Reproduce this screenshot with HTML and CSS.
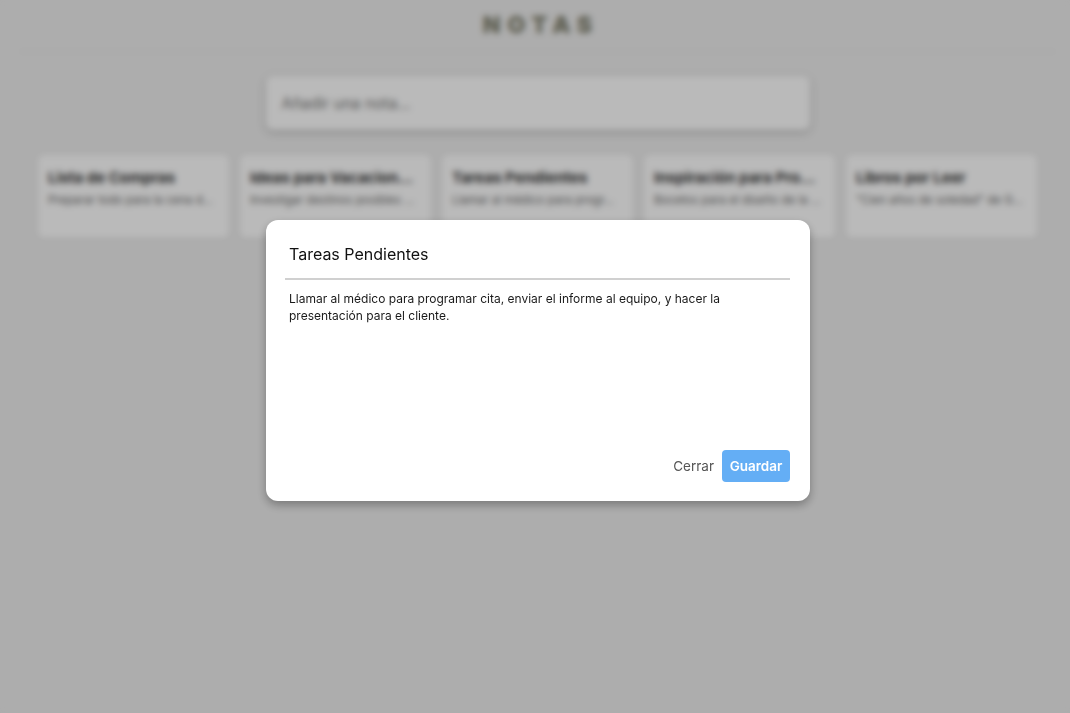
FILE: index.html
```html
<!DOCTYPE html>
<html lang="es">
<head>
<meta charset="utf-8">
<title>Notas</title>
<link rel="stylesheet" href="styles.css">
</head>
<body>
<div class="app">
  <header class="header">
    <h1 class="logo">NOTAS</h1>
  </header>
  <div class="composer">
    <div class="composer-input">Añadir una nota...</div>
  </div>
  <section class="notes">
    <article class="note"><h2 class="note-title">Lista de Compras</h2><p class="note-text">Preparar todo para la cena d...</p></article>
    <article class="note"><h2 class="note-title">Ideas para Vacacion...</h2><p class="note-text">Investigar destinos posibles ...</p></article>
    <article class="note"><h2 class="note-title">Tareas Pendientes</h2><p class="note-text">Llamar al médico para progr...</p></article>
    <article class="note"><h2 class="note-title">Inspiración para Pro...</h2><p class="note-text">Bocetos para el diseño de la ...</p></article>
    <article class="note"><h2 class="note-title">Libros por Leer</h2><p class="note-text">"Cien años de soledad" de G...</p></article>
  </section>
</div>
<div class="overlay">
  <div class="modal">
    <div class="modal-title">Tareas Pendientes</div>
    <div class="modal-body">Llamar al médico para programar cita, enviar el informe al equipo, y hacer la presentación para el cliente.</div>
    <div class="modal-actions">
      <button class="btn-link">Cerrar</button>
      <button class="btn-primary">Guardar</button>
    </div>
  </div>
</div>
</body>
</html>
```
FILE: styles.css
```css
* { box-sizing: border-box; }
html, body { margin: 0; height: 100%; }
body {
  background: #ededed;
  font-family: "Inter", "Open Sans", sans-serif;
  color: #222;
}
.app { padding: 0 15px 0 20px; }
.header {
  border-bottom: 1px solid #e2e2e2;
  display: flex;
  justify-content: center;
  padding: 12px 0 13px;
}
.logo {
  margin: 0;
  font-size: 23px;
  font-weight: 900;
  letter-spacing: 7px;
  padding-left: 7px;
  line-height: 26px;
  color: #828270;
}
.composer {
  display: flex;
  justify-content: center;
  padding-top: 24px;
}
.composer-input {
  width: 544px;
  height: 54px;
  background: #fff;
  border-radius: 7px;
  box-shadow: 0 2px 6px rgba(0,0,0,0.25);
  padding: 0 16px;
  display: flex;
  align-items: center;
  font-size: 15.5px;
  color: #777;
}
.notes {
  display: grid;
  grid-template-columns: repeat(5, 191px);
  gap: 11px;
  justify-content: center;
  margin-top: 25px;
}
.note {
  background: #fff;
  height: 83px;
  border-radius: 6px;
  padding: 14px 10px 13px;
  box-shadow: 0 1px 3px rgba(0,0,0,0.08);
}
.note-title {
  margin: 0;
  font-size: 15px;
  font-weight: 700;
  color: #333;
  line-height: 18px;
  white-space: nowrap;
}
.note-text {
  margin: 6px 0 0;
  font-size: 11.5px;
  color: #666;
  line-height: 14px;
  white-space: nowrap;
}
.overlay {
  position: fixed;
  inset: 0;
  background: rgba(0,0,0,0.27);
  backdrop-filter: blur(3px);
  display: flex;
  justify-content: center;
  align-items: flex-start;
  padding: 220px 0 0 6px;
}
.modal {
  width: 544px;
  background: #fff;
  border-radius: 12px;
  box-shadow: 0 4px 10px rgba(0,0,0,0.3);
  padding: 20px 20px 19px 19px;
  display: flex;
  flex-direction: column;
}
.modal-title {
  font-size: 16px;
  line-height: 24px;
  padding: 2px 4px 12px;
  color: #111;
  border-bottom: 2px solid #d0d0d0;
}
.modal-body {
  padding: 10px 4px 0;
  font-size: 12px;
  line-height: 17px;
  color: #1a1a1a;
  height: 170px;
}
.modal-actions {
  display: flex;
  justify-content: flex-end;
  align-items: center;
  gap: 8px;
}
.btn-link {
  border: 0;
  background: none;
  font: inherit;
  font-size: 13.5px;
  color: #555;
  padding: 0;
}
.btn-primary {
  border: 0;
  font: inherit;
  font-size: 13.5px;
  font-weight: 600;
  color: #fff;
  background: #64aef5;
  border-radius: 4px;
  height: 32px;
  width: 68px;
  padding: 0;
}
```
